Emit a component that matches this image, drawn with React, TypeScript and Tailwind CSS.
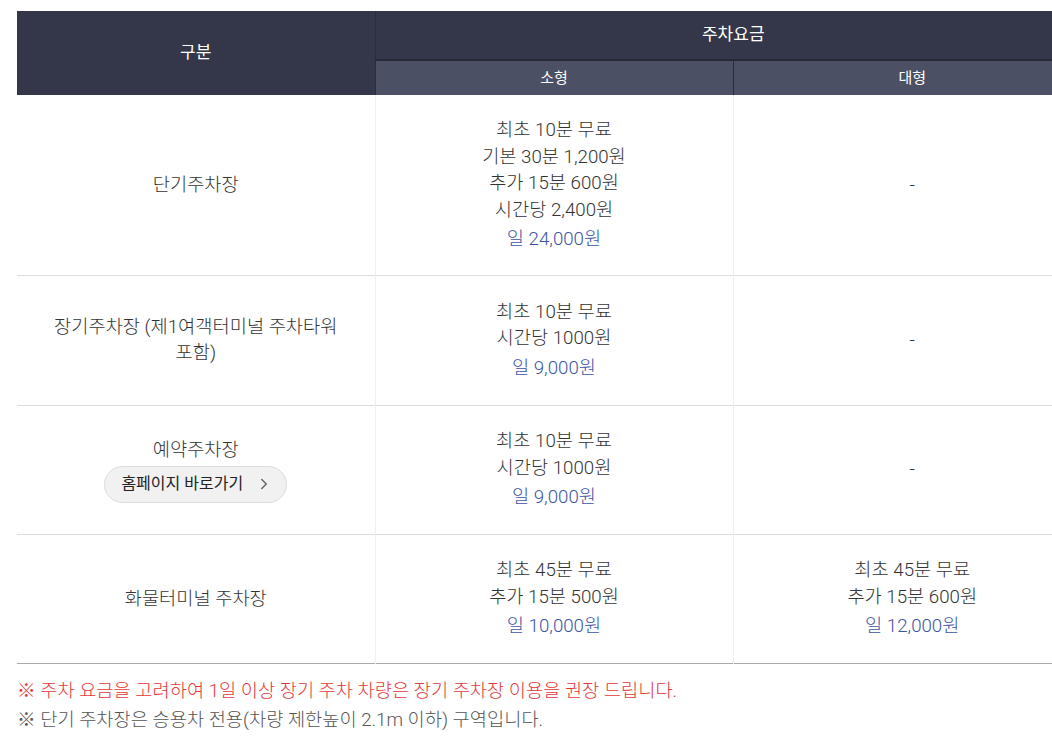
import { ChevronRight } from "lucide-react";

type Fee = { lines: string[]; day: string } | null;

type Row = {
  name: React.ReactNode;
  small: Fee;
  large: Fee;
  h: string;
};

const rows: Row[] = [
  {
    name: "단기주차장",
    small: {
      lines: ["최초 10분 무료", "기본 30분 1,200원", "추가 15분 600원", "시간당 2,400원"],
      day: "일 24,000원",
    },
    large: null,
    h: "h-[180px]",
  },
  {
    name: (
      <>
        장기주차장 (제1여객터미널 주차타워
        <br />
        포함)
      </>
    ),
    small: { lines: ["최초 10분 무료", "시간당 1000원"], day: "일 9,000원" },
    large: null,
    h: "h-[130px]",
  },
  {
    name: (
      <div className="flex flex-col items-center">
        <span>예약주차장</span>
        <button className="mt-[3px] flex h-[37px] items-center gap-[12px] rounded-full border border-[#dcdcdc] bg-[#f1f1f1] pl-[16px] pr-[13px] text-[16px] font-normal text-[#222]">
          홈페이지 바로가기
          <ChevronRight className="h-[18px] w-[18px] text-[#666]" strokeWidth={2} />
        </button>
      </div>
    ),
    small: { lines: ["최초 10분 무료", "시간당 1000원"], day: "일 9,000원" },
    large: null,
    h: "h-[129px]",
  },
  {
    name: "화물터미널 주차장",
    small: { lines: ["최초 45분 무료", "추가 15분 500원"], day: "일 10,000원" },
    large: { lines: ["최초 45분 무료", "추가 15분 600원"], day: "일 12,000원" },
    h: "h-[129px]",
  },
];

const FeeCell = ({ fee }: { fee: Fee }) =>
  fee ? (
    <div className="flex flex-col items-center leading-[26.5px]">
      {fee.lines.map((l) => (
        <span key={l}>{l}</span>
      ))}
      <span className="mt-[3px] text-[#3c53a6]">{fee.day}</span>
    </div>
  ) : (
    <span>-</span>
  );

export default function App() {
  return (
    <div
      className="w-[1052px] overflow-hidden bg-white pl-[17px] pt-[11px]"
      style={{ fontFamily: "Roboto, 'Noto Sans CJK KR', sans-serif" }}
    >
      <table className="w-[1074px] table-fixed border-collapse text-center text-[18.7px] font-light text-[#333]">
        <colgroup>
          <col className="w-[358px]" />
          <col className="w-[358px]" />
          <col className="w-[358px]" />
        </colgroup>
        <thead>
          <tr className="h-[49px] bg-[#343649] text-white">
            <th rowSpan={2} className="border-r border-[#2b2d3e] text-[17px] font-normal">
              구분
            </th>
            <th colSpan={2} className="border-b-2 border-[#262838] text-[17px] font-normal">
              주차요금
            </th>
          </tr>
          <tr className="h-[35px] bg-[#4b5064] text-white">
            <th className="border-r border-[#2a2c3c] text-[15px] font-normal">소형</th>
            <th className="text-[15px] font-normal">대형</th>
          </tr>
        </thead>
        <tbody>
          {rows.map((r, i) => (
            <tr
              key={i}
              className={`${r.h} border-b ${i === rows.length - 1 ? "border-[#aaaaaa]" : "border-[#dddddd]"}`}
            >
              <td className="border-r border-[#efefef] px-[30px] leading-[26px]">{r.name}</td>
              <td className="border-r border-[#efefef]">
                <FeeCell fee={r.small} />
              </td>
              <td>
                <FeeCell fee={r.large} />
              </td>
            </tr>
          ))}
        </tbody>
      </table>
      <div className="mt-[13px] text-[18.7px] font-light leading-[29px]">
        <p className="text-[#e3383b]">※ 주차 요금을 고려하여 1일 이상 장기 주차 차량은 장기 주차장 이용을 권장 드립니다.</p>
        <p className="text-[#555]">※ 단기 주차장은 승용차 전용(차량 제한높이 2.1m 이하) 구역입니다.</p>
      </div>
    </div>
  );
}
